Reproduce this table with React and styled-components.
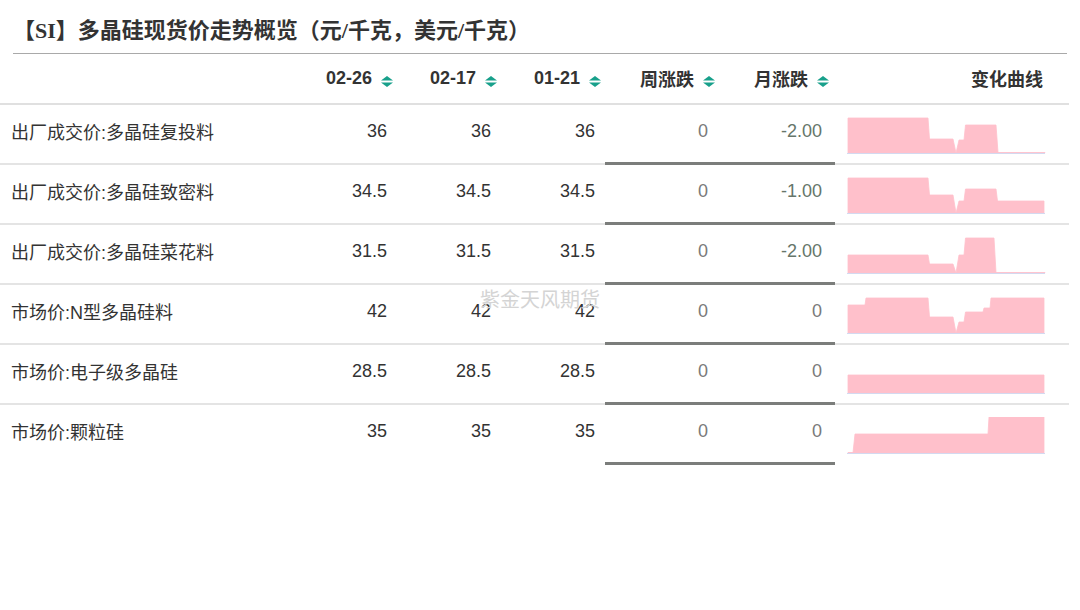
import React from 'react';
import styled, { createGlobalStyle } from 'styled-components';

const GlobalStyle = createGlobalStyle`
  html, body {
    margin: 0;
    padding: 0;
    background: #ffffff;
  }
  body {
    font-family: "Liberation Sans", "Noto Sans CJK SC", sans-serif;
    color: #333;
  }
`;

const COLS = '293px 104px 104px 104px 116px 114px 234px';

const columns = [
  { key: 'd1', label: '02-26', pr: 4 },
  { key: 'd2', label: '02-17', pr: 4 },
  { key: 'd3', label: '01-21', pr: 4 },
  { key: 'wk', label: '周涨跌', pr: 6 },
  { key: 'mo', label: '月涨跌', pr: 6 },
];

const rows = [
  {
    name: '出厂成交价:多晶硅复投料', d1: '36', d2: '36', d3: '36', wk: '0', mo: '-2.00',
    curve: [[0, 35], [80, 35], [81.5, 14], [105, 14], [108, 0], [111, 13], [116, 13], [117.5, 28], [148, 28], [150, 0.5], [197, 0.5]],
  },
  {
    name: '出厂成交价:多晶硅致密料', d1: '34.5', d2: '34.5', d3: '34.5', wk: '0', mo: '-1.00',
    curve: [[0, 35], [80, 35], [81.5, 18], [105, 18], [108, 0], [111, 12], [116, 12], [117.5, 24], [148, 24], [149.5, 12], [196, 12]],
  },
  {
    name: '出厂成交价:多晶硅菜花料', d1: '31.5', d2: '31.5', d3: '31.5', wk: '0', mo: '-2.00',
    curve: [[0, 18], [80, 18], [81.5, 9], [105, 9], [108, 0], [111, 18], [116, 18], [117.5, 35], [146, 35], [148, 0.5], [197, 0.5]],
  },
  {
    name: '市场价:N型多晶硅料', d1: '42', d2: '42', d3: '42', wk: '0', mo: '0',
    curve: [[0, 28], [17, 28], [18, 35], [80, 35], [81.5, 16], [105, 16], [108, 0], [111, 11], [116, 11], [117.5, 21], [135, 21], [136, 25], [142, 25], [143, 35], [196, 35]],
  },
  {
    name: '市场价:电子级多晶硅', d1: '28.5', d2: '28.5', d3: '28.5', wk: '0', mo: '0',
    curve: [[0, 18], [196, 18]],
  },
  {
    name: '市场价:颗粒硅', d1: '35', d2: '35', d3: '35', wk: '0', mo: '0',
    curve: [[0, 0.5], [5, 0.5], [7, 19], [140, 19], [141, 36], [196, 36]],
  },
];

const Page = styled.div`
  position: relative;
  width: 1069px;
`;

const Title = styled.h1`
  margin: 0 2px 0 13px;
  height: 54px;
  display: flex;
  align-items: center;
  padding: 3px 0 0 0;
  box-sizing: border-box;
  border-bottom: 1px solid #a9a9a9;
  font-family: "Liberation Serif", "Noto Sans CJK SC", serif;
  font-size: 22px;
  font-weight: 700;
  color: #333;
`;

const Row = styled.div`
  display: grid;
  grid-template-columns: ${COLS};
  height: ${(p) => (p.$head ? '51px' : '60px')};
`;

const Cell = styled.div`
  display: flex;
  align-items: center;
  justify-content: ${(p) => (p.$left ? 'flex-start' : 'flex-end')};
  box-sizing: border-box;
  padding-left: ${(p) => (p.$left ? '11px' : '0')};
  padding-right: ${(p) => p.$pr || 0}px;
  padding-bottom: ${(p) => (p.$mark ? '5px' : '6px')};
  font-size: 18px;
  color: ${(p) => p.$color || '#333'};
  border-bottom: ${(p) =>
    p.$mark ? '3px solid #7b7d7b' : p.$last ? '2px solid transparent' : '2px solid #e4e4e4'};
`;

const HeadCell = styled.div`
  display: flex;
  align-items: center;
  justify-content: flex-end;
  gap: 9px;
  box-sizing: border-box;
  padding-right: ${(p) => p.$pr || 0}px;
  padding-bottom: 1px;
  font-size: 18px;
  font-weight: 700;
  color: #333;
  border-bottom: 2px solid #e0e0e0;
`;

const ChartCell = styled.div`
  box-sizing: border-box;
  padding: 12px 0 0 12px;
  border-bottom: ${(p) => (p.$last ? 'none' : '2px solid #e4e4e4')};

  svg {
    display: block;
  }
`;

const Watermark = styled.div`
  position: absolute;
  left: 480px;
  top: 284px;
  font-family: "Noto Sans CJK SC", sans-serif;
  font-size: 20px;
  color: #d4d4d4;
  pointer-events: none;
`;

function SortIcon() {
  return (
    <svg width="12" height="11" viewBox="0 0 12 11" style={{ marginTop: 7 }}>
      <polygon points="6,0 12,4.5 0,4.5" fill="#18a08b" />
      <polygon points="0,6.5 12,6.5 6,11" fill="#18a08b" />
    </svg>
  );
}

function Curve({ points }) {
  const h = 36;
  const d =
    `M${points[0][0] + 1},${h} ` +
    points.map(([x, v]) => `L${x + 1},${h - v}`).join(' ') +
    ` L${points[points.length - 1][0] + 1},${h} Z`;
  return (
    <svg width="200" height="38" viewBox="0 0 200 38">
      <path d={d} fill="#ffc0cb" stroke="#ffc0cb" strokeWidth="0.8" />
      <line x1="-1" y1="36.5" x2="198" y2="36.5" stroke="#d3d9f0" strokeWidth="1" />
    </svg>
  );
}

export default function App() {
  return (
    <>
      <GlobalStyle />
      <Page>
        <Title>【SI】多晶硅现货价走势概览（元/千克，美元/千克）</Title>
        <Row $head>
          <HeadCell />
          {columns.map((c) => (
            <HeadCell key={c.key} $pr={c.pr}>
              <span>{c.label}</span>
              <SortIcon />
            </HeadCell>
          ))}
          <HeadCell $pr={26}>变化曲线</HeadCell>
        </Row>
        {rows.map((r, i) => {
          const last = i === rows.length - 1;
          return (
            <Row key={r.name}>
              <Cell $left $last={last}>{r.name}</Cell>
              <Cell $pr={10} $last={last}>{r.d1}</Cell>
              <Cell $pr={10} $last={last}>{r.d2}</Cell>
              <Cell $pr={10} $last={last}>{r.d3}</Cell>
              <Cell $pr={13} $mark $color="#7a7a7a">{r.wk}</Cell>
              <Cell $pr={13} $mark $color={r.mo.startsWith('-') ? '#66766a' : '#7a7a7a'}>
                {r.mo}
              </Cell>
              <ChartCell $last={last}>
                <Curve points={r.curve} />
              </ChartCell>
            </Row>
          );
        })}
        <Watermark>紫金天风期货</Watermark>
      </Page>
    </>
  );
}
